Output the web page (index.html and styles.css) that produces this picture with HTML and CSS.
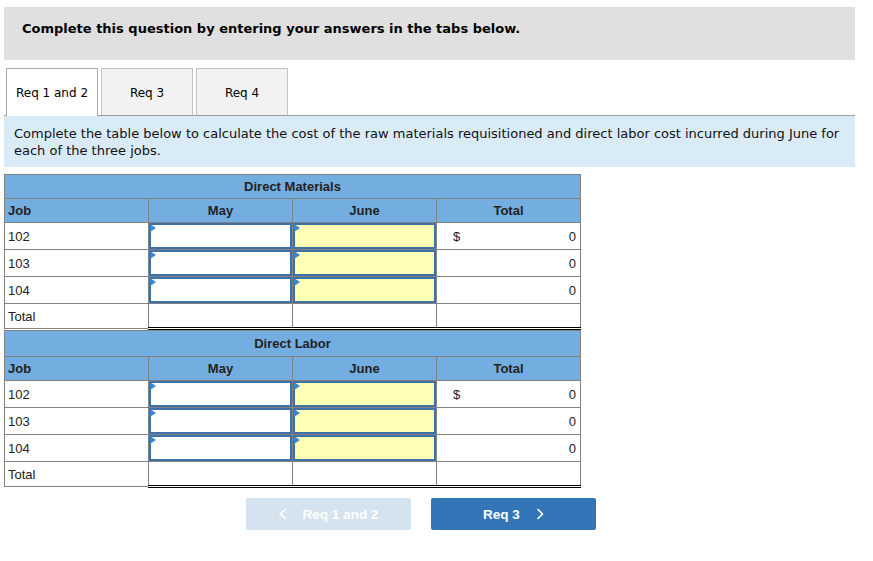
FILE: index.html
```html
<!DOCTYPE html>
<html>
<head>
<meta charset="utf-8">
<link rel="stylesheet" href="styles.css">
</head>
<body>
<div class="page">
  <div class="banner">Complete this question by entering your answers in the tabs below.</div>
  <div class="tabs">
    <div class="tab active">Req 1 and 2</div>
    <div class="tab">Req 3</div>
    <div class="tab">Req 4</div>
  </div>
  <div class="instructions">Complete the table below to calculate the cost of the raw materials requisitioned and direct labor cost incurred during June for each of the three jobs.</div>

  <table class="grid first">
    <colgroup><col class="c"><col class="c"><col class="c"><col class="c"></colgroup>
    <tr class="title"><th colspan="4">Direct Materials</th></tr>
    <tr class="heads"><th class="left">Job</th><th>May</th><th>June</th><th>Total</th></tr>
    <tr class="row"><td class="job">102</td><td class="in"><div class="box"><span class="flag"></span></div></td><td class="in"><div class="box yellow"><span class="flag"></span></div></td><td class="tot"><span>$</span><span>0</span></td></tr>
    <tr class="row"><td class="job">103</td><td class="in"><div class="box"><span class="flag"></span></div></td><td class="in"><div class="box yellow"><span class="flag"></span></div></td><td class="tot"><span></span><span>0</span></td></tr>
    <tr class="row"><td class="job">104</td><td class="in"><div class="box"><span class="flag"></span></div></td><td class="in"><div class="box yellow"><span class="flag"></span></div></td><td class="tot"><span></span><span>0</span></td></tr>
    <tr class="sum"><td class="job">Total</td><td class="st"></td><td class="st"></td><td class="st"></td></tr>
  </table>

  <table class="grid second">
    <colgroup><col class="c"><col class="c"><col class="c"><col class="c"></colgroup>
    <tr class="title"><th colspan="4">Direct Labor</th></tr>
    <tr class="heads"><th class="left">Job</th><th>May</th><th>June</th><th>Total</th></tr>
    <tr class="row"><td class="job">102</td><td class="in"><div class="box"><span class="flag"></span></div></td><td class="in"><div class="box yellow"><span class="flag"></span></div></td><td class="tot"><span>$</span><span>0</span></td></tr>
    <tr class="row"><td class="job">103</td><td class="in"><div class="box"><span class="flag"></span></div></td><td class="in"><div class="box yellow"><span class="flag"></span></div></td><td class="tot"><span></span><span>0</span></td></tr>
    <tr class="row"><td class="job">104</td><td class="in"><div class="box"><span class="flag"></span></div></td><td class="in"><div class="box yellow"><span class="flag"></span></div></td><td class="tot"><span></span><span>0</span></td></tr>
    <tr class="sum"><td class="job">Total</td><td class="st"></td><td class="st"></td><td class="st"></td></tr>
  </table>

  <div class="nav">
    <div class="btn disabled"><svg class="chev left" width="8" height="12" viewBox="0 0 8 12"><polyline points="6.5,1 1.5,6 6.5,11" fill="none" stroke="#ffffff" stroke-width="1.6"/></svg>Req 1 and 2</div>
    <div class="btn primary">Req 3<svg class="chev right" width="8" height="12" viewBox="0 0 8 12"><polyline points="1.5,1 6.5,6 1.5,11" fill="none" stroke="#ffffff" stroke-width="1.6"/></svg></div>
  </div>
</div>
</body>
</html>
```

FILE: styles.css
```css
html, body {
  margin: 0;
  padding: 0;
  background: #ffffff;
}
body {
  font-family: "DejaVu Sans", Verdana, sans-serif;
  color: #111;
}
.page {
  padding: 7px 18px 0 4px;
  width: 851px;
}
.banner {
  height: 53px;
  box-sizing: border-box;
  background: #e0e0e0;
  padding: 13px 0 0 18px;
  font-weight: bold;
  font-size: 13px;
  line-height: 17px;
  color: #000;
}
.tabs {
  display: flex;
  gap: 3px;
  margin-top: 8px;
  padding-left: 2px;
  position: relative;
  z-index: 1;
}
.tab {
  width: 92px;
  height: 47px;
  box-sizing: border-box;
  border: 1px solid #c4c4c4;
  border-bottom: none;
  background: #f2f2f2;
  font-size: 12px;
  padding-top: 1px;
  display: flex;
  align-items: center;
  justify-content: center;
  color: #000;
}
.tab.active {
  background: #ffffff;
  border-color: #a8a8a8;
  height: 48px;
  margin-bottom: -1px;
}
.instructions {
  background: #d9ebf7;
  border-top: 1px solid #9c9c9c;
  padding: 9px 10px 8px 10px;
  font-size: 13px;
  line-height: 17px;
  color: #111;
}
.grid {
  border-collapse: collapse;
  table-layout: fixed;
  width: 577px;
  font-family: "Liberation Sans", Arial, sans-serif;
  font-size: 13px;
  color: #222;
}
.grid.first {
  margin-top: 7px;
}
.grid.second {
  margin-top: 0;
}
.grid col.c {
  width: 144px;
}
.grid th, .grid td {
  border: 1px solid #828282;
  padding: 0;
}
.grid th {
  background: #74aee0;
  font-weight: bold;
  text-align: center;
  color: #222;
}
.grid .title th {
  height: 23px;
}
.grid.second .title th {
  height: 25px;
}
.grid .heads th {
  height: 23px;
}
.grid .heads th.left {
  text-align: left;
  padding-left: 3px;
}
.grid .row td {
  height: 26px;
}
.grid td.job {
  padding-left: 3px;
  vertical-align: middle;
}
.grid td.in {
  padding: 0;
  vertical-align: top;
  position: relative;
}
.box {
  height: 26px;
  box-sizing: border-box;
  border: 2px solid #3f70a8;
  background: #ffffff;
  position: relative;
}
.box.yellow {
  background: #ffffb5;
}
.flag {
  position: absolute;
  left: -1px;
  top: -1px;
  width: 0;
  height: 0;
  border-top: 4px solid transparent;
  border-bottom: 4px solid transparent;
  border-left: 6px solid #3a86cf;
}
.grid td.tot {
  padding: 0 4px 0 16px;
  vertical-align: middle;
}
.grid td.tot span:first-child {
  float: left;
}
.grid td.tot span:last-child {
  float: right;
}
.grid .sum td {
  height: 23px;
}
.grid .sum td.st {
  border-top: 1px solid #000;
  border-bottom: 3px double #000;
}
.nav {
  display: flex;
  gap: 20px;
  margin-top: 10px;
  padding-left: 242px;
}
.btn {
  width: 165px;
  height: 32px;
  border-radius: 2px;
  display: flex;
  align-items: center;
  justify-content: center;
  font-family: "Liberation Sans", Arial, sans-serif;
  font-weight: bold;
  font-size: 13.5px;
  color: #fff;
}
.btn.disabled {
  background: #d5e3f0;
}
.btn.primary {
  background: #3375b6;
}
.chev {
  display: block;
}
.chev.left {
  margin-right: 16px;
}
.chev.right {
  margin-left: 16px;
}
```
